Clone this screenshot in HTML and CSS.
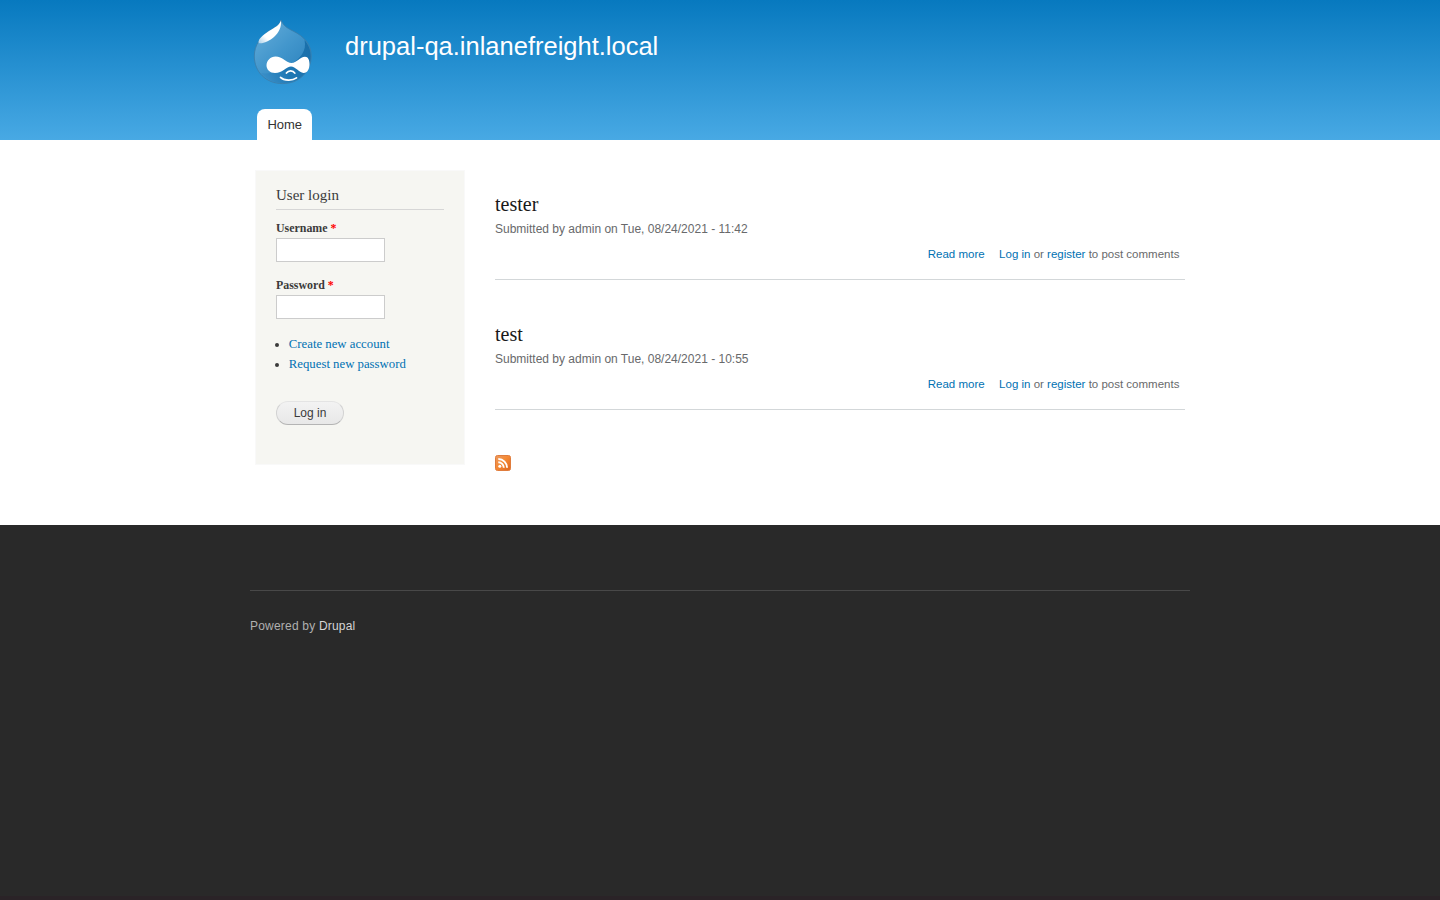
FILE: index.html
```html
<!DOCTYPE html>
<html lang="en">
<head>
<meta charset="utf-8">
<title>drupal-qa.inlanefreight.local</title>
<link rel="stylesheet" href="styles.css">
</head>
<body>
<header class="header">
  <div class="header-inner">
    <div class="branding">
      <a class="logo" href="#" aria-label="Home">
        <svg width="64" height="73" viewBox="0 0 64 73">
          <defs>
            <linearGradient id="drop" x1="0.1" y1="0.2" x2="0.7" y2="0.9">
              <stop offset="0" stop-color="#5ca7d6"/><stop offset="0.5" stop-color="#4296cc"/><stop offset="1" stop-color="#2f86c0"/>
            </linearGradient>
            <linearGradient id="shade" x1="1" y1="0.3" x2="0" y2="0.8">
              <stop offset="0" stop-color="#1a70ab"/><stop offset="0.55" stop-color="#1f78b4"/><stop offset="1" stop-color="#3a8fc8"/>
            </linearGradient>
            <linearGradient id="shine" x1="1" y1="0" x2="0" y2="1">
              <stop offset="0" stop-color="#fff"/><stop offset="0.7" stop-color="#fff"/><stop offset="1" stop-color="#a9d0ea"/>
            </linearGradient>
          </defs>
          <path d="M31 5C33 10.500 37 13 43 16C54 21.500 61.200 29 61.200 41C61.200 57 49 68.600 32.500 68.600C16 68.600 4.300 57 4.300 41C4.300 30 11 22 18 16.500C25 12.500 30 10 31 5Z" fill="url(#drop)" stroke="#3b7ca8" stroke-width=".8"/>
          <path d="M54.500 25C57 36 50 44 41 49C32 55 20 60 11 58C16 64.500 23 68 32.500 68C49 68 60.700 57 60.700 41C60.700 34 58 29 54.500 25Z" fill="url(#shade)"/>
          <path d="M31 5.500C29.500 10 25 12.500 19 16C12 20.500 8.500 24 8.500 27.500C10 30 19 26.500 24 22C29 17.500 31.500 12 31 5.500Z" fill="url(#shine)"/>
          <path d="M25.500 41.500C32.500 41.500 36.500 48 41.500 48C46.500 48 50 41.700 55 41.700C58.200 41.700 59.500 45 59.500 49C59.500 54 57.500 58 53.500 57.900C49 57.500 45.500 51.600 41 51.600C36.500 51.600 32.500 58 25 58C20 58 16.500 54.500 16.500 50.500C16.500 45.500 20.500 41.500 25.500 41.500Z" fill="#fff"/>
          <path d="M36.400 58.100C37.500 56.500 39 55.800 40.700 55.800C42.500 55.800 44 56.800 44.800 58.200M30.500 62.300C34 65.800 42.500 66 46.500 62.800" fill="none" stroke="#fff" stroke-width="1.700" stroke-linecap="round"/>
        </svg>
      </a>
      <div class="site-name">drupal-qa.inlanefreight.local</div>
    </div>
    <nav class="main-menu"><a class="tab" href="#">Home</a></nav>
  </div>
</header>
<main class="main">
  <aside class="sidebar">
    <h2 class="block-title">User login</h2>
    <form class="login">
      <label class="label" for="user">Username <span class="required">*</span></label>
      <input class="field" id="user" type="text">
      <label class="label" for="pass">Password <span class="required">*</span></label>
      <input class="field" id="pass" type="password">
      <ul class="account-links">
        <li><a href="#">Create new account</a></li>
        <li><a href="#">Request new password</a></li>
      </ul>
      <button class="submit" type="button">Log in</button>
    </form>
  </aside>
  <section class="content">
    <article class="post">
      <h2 class="post-title">tester</h2>
      <div class="meta">Submitted by admin on Tue, 08/24/2021 - 11:42</div>
      <div class="links"><a href="#">Read more</a><span><a href="#">Log in</a> or <a href="#">register</a> to post comments</span></div>
    </article>
    <article class="post">
      <h2 class="post-title">test</h2>
      <div class="meta">Submitted by admin on Tue, 08/24/2021 - 10:55</div>
      <div class="links"><a href="#">Read more</a><span><a href="#">Log in</a> or <a href="#">register</a> to post comments</span></div>
    </article>
    <a class="feed" href="#" aria-label="RSS feed">
      <svg width="16" height="16" viewBox="0 0 16 16">
        <defs><linearGradient id="rss" x1="0" y1="0" x2="1" y2="1"><stop offset="0" stop-color="#ea9a62"/><stop offset=".45" stop-color="#f58a35"/><stop offset="1" stop-color="#dc6520"/></linearGradient></defs>
        <rect x=".5" y=".5" width="15" height="15" rx="2" fill="url(#rss)" stroke="#e07c3c"/>
        <circle cx="4.800" cy="11.300" r="1.500" fill="#fff"/>
        <path d="M3.300 7.300A5.500 5.500 0 0 1 8.800 12.800M3.300 4A8.800 8.800 0 0 1 12.100 12.800" fill="none" stroke="#fff" stroke-width="1.900"/>
      </svg>
    </a>
  </section>
</main>
<footer class="footer">
  <div class="footer-inner">Powered by <a href="#">Drupal</a></div>
</footer>
</body>
</html>
```
FILE: styles.css
```css
* { box-sizing: border-box; }
body {
  margin: 0;
  min-height: 900px;
  display: flex;
  flex-direction: column;
  background: #fff;
  color: #3b3b3b;
  font-family: "Liberation Serif", "Times New Roman", serif;
  font-size: 14px;
}
a { color: #0071b3; text-decoration: none; }
h2 { margin: 0; font-weight: normal; }
.header { height: 140px; background: linear-gradient(#0779bf, #48a9e4); }
.header-inner {
  width: 940px;
  height: 100%;
  margin: 0 auto;
  display: flex;
  flex-direction: column;
  justify-content: space-between;
}
.branding { display: flex; padding-top: 15px; }
.logo { width: 95px; height: 73px; }
.logo svg { display: block; }
.site-name {
  padding-top: 16px;
  color: #fffeff;
  font: 25.5px/30px "Liberation Sans", Arial, sans-serif;
}
.main-menu { display: flex; padding-left: 7px; }
.tab {
  height: 31px;
  padding: 0 10.4px;
  border-radius: 8px 8px 0 0;
  background: #fff;
  color: #333;
  font: 13px/31px "Liberation Sans", Arial, sans-serif;
}
.main {
  width: 930px;
  height: 385px;
  margin: 0 auto;
  padding-top: 30px;
  display: flex;
  align-items: flex-start;
  gap: 30px;
}
.sidebar {
  width: 210px;
  height: 295px;
  padding: 15px 20px;
  border: 1px solid #f9f9f9;
  background: #f6f6f2;
}
.block-title {
  height: 24px;
  border-bottom: 1px solid #d6d6d6;
  font-size: 15px;
  line-height: 19px;
}
.login { display: flex; flex-direction: column; align-items: flex-start; }
.label { margin-top: 10px; font-size: 11.9px; font-weight: bold; line-height: 16px; }
.required { color: #f00; }
.field {
  width: 109px;
  height: 24px;
  margin: 2px 0 5px;
  border: 1px solid #ccc;
  background: #fff;
}
.field + .label { margin-top: 10px; }
.account-links {
  margin: 10px 0 27px;
  padding-left: 12.8px;
  font-size: 12.78px;
  line-height: 20px;
}
.submit {
  width: 68px;
  height: 24px;
  padding: 0;
  border: 1px solid #e4e4e4;
  border-bottom-color: #b4b4b4;
  border-left-color: #d2d2d2;
  border-right-color: #d2d2d2;
  border-radius: 12px;
  background: linear-gradient(#f3f3f3, #e8e8e8);
  color: #3a3a3a;
  font: 12px/20px "Liberation Sans", Arial, sans-serif;
}
.content { width: 690px; padding-top: 20px; }
.post { height: 90px; margin-bottom: 40px; border-bottom: 1px solid #d3d7d9; }
.post-title { color: #181818; font-size: 20px; line-height: 28px; }
.meta {
  color: #68696b;
  font: 12px/18px "Liberation Sans", Arial, sans-serif;
  padding-top: 2px;
}
.links {
  display: flex;
  justify-content: flex-end;
  gap: 14.5px;
  padding: 8px 5.6px 0 0;
  color: #68696b;
  font: 11.5px/16px "Liberation Sans", Arial, sans-serif;
}
.feed { display: block; margin-top: 45px; }
.feed svg { display: block; }
.footer {
  flex: 1;
  padding-top: 65px;
  border-bottom: 4px solid #2a2327;
  background: #292929;
}
.footer-inner {
  width: 940px;
  margin: 0 auto;
  padding-top: 27px;
  border-top: 1px solid #484848;
  color: #b0b0b0;
  font: 12px/16px "Liberation Sans", Arial, sans-serif;
  letter-spacing: .2px;
}
.footer-inner a { color: #d5d5d5; }
```
